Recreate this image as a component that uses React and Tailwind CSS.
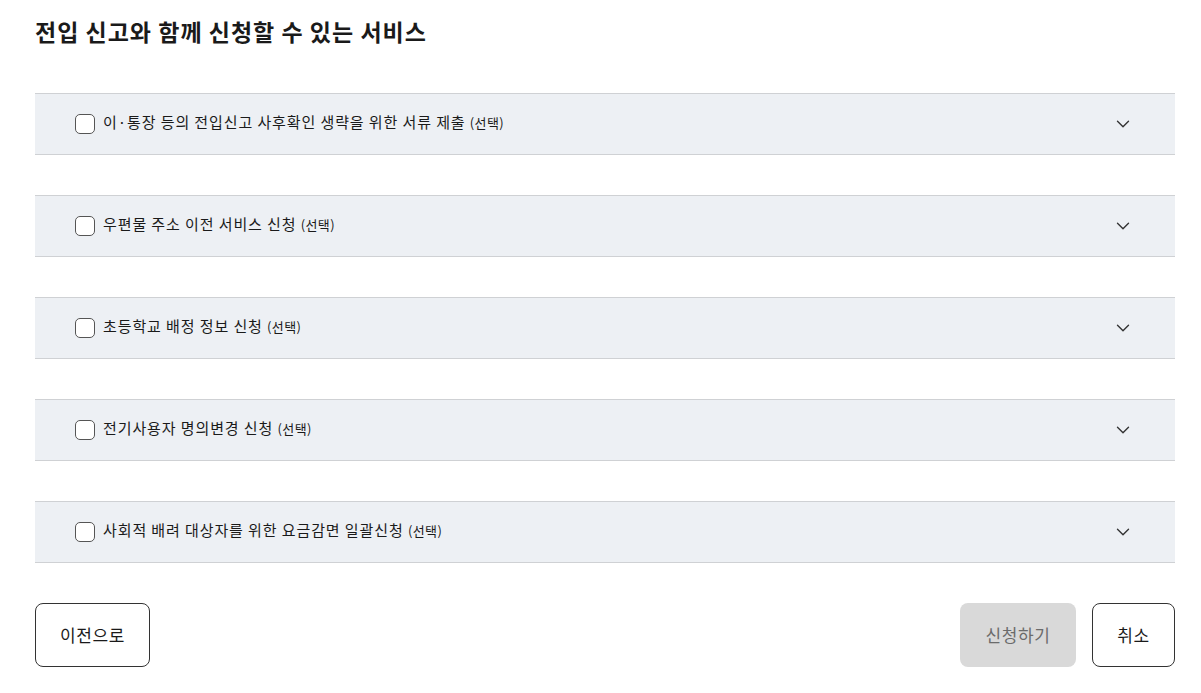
import { ChevronDown } from "lucide-react";

const items = [
  "이·통장 등의 전입신고 사후확인 생략을 위한 서류 제출",
  "우편물 주소 이전 서비스 신청",
  "초등학교 배정 정보 신청",
  "전기사용자 명의변경 신청",
  "사회적 배려 대상자를 위한 요금감면 일괄신청",
];

export default function App() {
  return (
    <div
      className="bg-white min-h-screen pl-[35px] pr-[26px] pt-[15px] text-[#1a1a1a]"
      style={{ fontFamily: '"Noto Sans CJK KR", "Noto Sans", sans-serif' }}
    >
      <h1 className="text-[23px] font-bold leading-[32px] tracking-[1px]">
        전입 신고와 함께 신청할 수 있는 서비스
      </h1>

      {/* Service list */}
      <div className="mt-[46px] flex flex-col gap-[40px]">
        {items.map((t) => (
          <div
            key={t}
            className="h-[62px] bg-[#edf0f4] border-y border-[#cfd1d4] flex items-center pl-[40px] pr-[41px]"
          >
            <span className="w-[20px] h-[20px] rounded-[5px] border border-[#555] bg-white shrink-0" />
            <span className="ml-[8px] mb-[3px] text-[15px] tracking-[0.9px]">
              {t} <span className="text-[13px] tracking-[0.4px]">(선택)</span>
            </span>
            <ChevronDown className="ml-auto w-[22px] h-[22px] text-[#333]" strokeWidth={1.5} />
          </div>
        ))}
      </div>

      {/* Buttons */}
      <div className="mt-[40px] flex items-center">
        <button className="w-[115px] h-[64px] rounded-[8px] border border-[#333] text-[17px] tracking-[0.6px] bg-white">
          이전으로
        </button>
        <button className="ml-auto w-[116px] h-[64px] rounded-[8px] bg-[#d9d9d9] text-[#6b6b6b] text-[17px] tracking-[0.6px]">
          신청하기
        </button>
        <button className="ml-[16px] w-[83px] h-[64px] rounded-[8px] border border-[#333] text-[17px] tracking-[0.6px] bg-white">
          취소
        </button>
      </div>
    </div>
  );
}
